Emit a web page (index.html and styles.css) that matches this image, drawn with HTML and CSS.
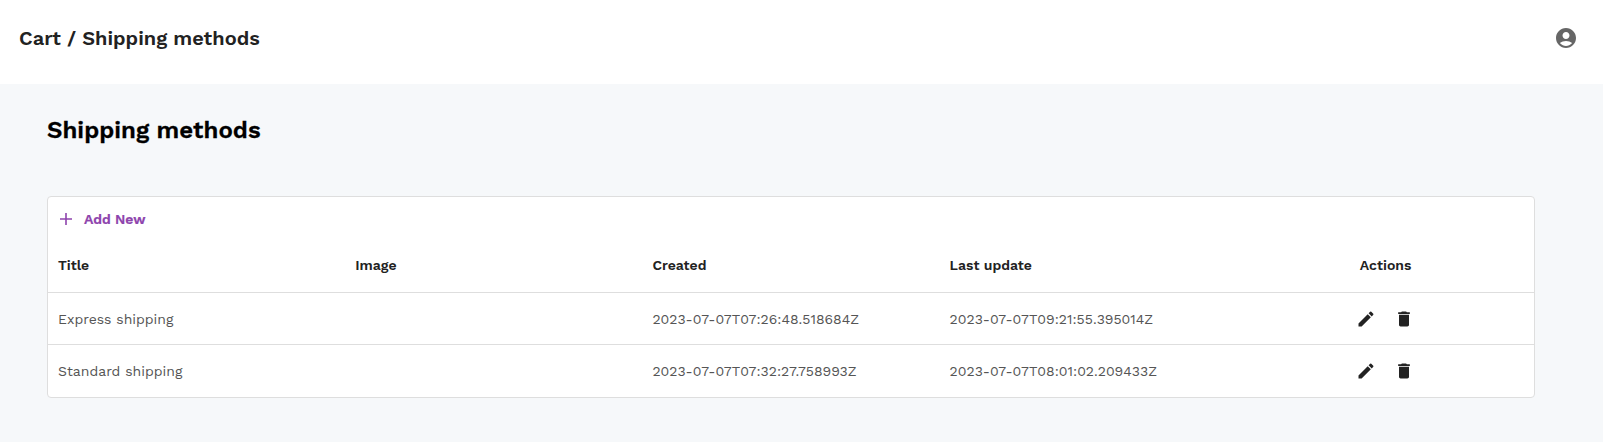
FILE: index.html
```html
<!DOCTYPE html>
<html lang="en">
<head>
<meta charset="utf-8">
<title>Shipping methods</title>
<link rel="stylesheet" href="styles.css">
</head>
<body>
<svg class="sprite" aria-hidden="true">
  <symbol id="edit" viewBox="0 0 24 24"><path d="M3 17.25V21h3.75L17.81 9.94l-3.75-3.75L3 17.25zM20.71 7.04c.39-.39.39-1.02 0-1.41l-2.34-2.34a.9959.9959 0 0 0-1.41 0l-1.83 1.83 3.75 3.75 1.83-1.83z"/></symbol>
  <symbol id="delete" viewBox="0 0 24 24"><path d="M6 19c0 1.1.9 2 2 2h8c1.1 0 2-.9 2-2V7H6v12zM19 4h-3.500l-1-1h-5l-1 1H5v2h14V4z"/></symbol>
</svg>
<header class="topbar">
  <div class="breadcrumb">Cart / Shipping methods</div>
  <svg class="account" viewBox="0 0 24 24"><path d="M12 2C6.480 2 2 6.480 2 12s4.480 10 10 10 10-4.480 10-10S17.520 2 12 2zm0 4c1.930 0 3.500 1.570 3.500 3.500S13.930 13 12 13s-3.500-1.570-3.500-3.500S10.070 6 12 6zm0 14c-2.030 0-4.430-.82-6.140-2.880C7.550 15.800 9.680 15 12 15s4.450.8 6.140 2.120C16.430 19.180 14.030 20 12 20z"/></svg>
</header>
<main class="content">
  <h1 class="title">Shipping methods</h1>
  <section class="card">
    <button class="add"><svg class="plus" viewBox="0 0 12 12"><path d="M6 0v12M0 6h12"/></svg>Add New</button>
    <div class="row head">
      <div>Title</div><div>Image</div><div>Created</div><div>Last update</div><div class="actions-head">Actions</div>
    </div>
    <div class="row">
      <div>Express shipping</div><div></div><div>2023-07-07T07:26:48.518684Z</div><div>2023-07-07T09:21:55.395014Z</div>
      <div class="actions"><svg class="icon"><use href="#edit"/></svg><svg class="icon"><use href="#delete"/></svg></div>
    </div>
    <div class="row">
      <div>Standard shipping</div><div></div><div>2023-07-07T07:32:27.758993Z</div><div>2023-07-07T08:01:02.209433Z</div>
      <div class="actions"><svg class="icon"><use href="#edit"/></svg><svg class="icon"><use href="#delete"/></svg></div>
    </div>
  </section>
</main>
</body>
</html>
```
FILE: styles.css
```css
* { box-sizing: border-box; }
body { margin: 0; height: 442px; overflow: hidden; background: #f6f8fa; color: #222; font-family: "Work Sans", "Noto Sans", sans-serif; }
.sprite { display: none; }
.topbar { height: 84px; padding: 0 25px 8px 19px; background: #fff; display: flex; align-items: center; justify-content: space-between; }
.breadcrumb { font-size: 20px; line-height: 24px; font-weight: 600; }
.account { width: 24px; height: 24px; fill: #666; }
.content { padding: 32px 68px 0 47px; }
.title { margin: 0 0 52px; font-size: 24px; line-height: 28px; font-weight: 600; letter-spacing: 0.03px; -webkit-text-stroke: 0.3px #000; color: #000; white-space: nowrap; }
.card { height: 202px; background: #fff; border: 1px solid #dedede; border-radius: 4px; }
.add { display: flex; align-items: center; gap: 12px; height: 44px; padding: 0 12px; border: 0; background: none; font: 600 14px/20px "Work Sans", "Noto Sans", sans-serif; -webkit-text-stroke: 0.2px #8e44ad; color: #8e44ad; }
.plus { width: 12px; height: 12px; stroke: #8e44ad; stroke-width: 1.600; fill: none; }
.row { display: grid; grid-template-columns: repeat(5, 1fr); align-items: center; height: 52px; font-size: 14px; line-height: 20px; font-weight: 400; color: #555; }
.row > div { padding-left: 10px; }
.row + .row { border-top: 1px solid #dedede; }
.head { height: 51px; padding-bottom: 3px; font-weight: 600; color: #222; }
.row > .actions-head { padding-left: 123px; }
.row > .actions { display: flex; align-items: center; gap: 18px; padding-left: 119px; }
.icon { width: 20px; height: 20px; fill: #222; }
```
